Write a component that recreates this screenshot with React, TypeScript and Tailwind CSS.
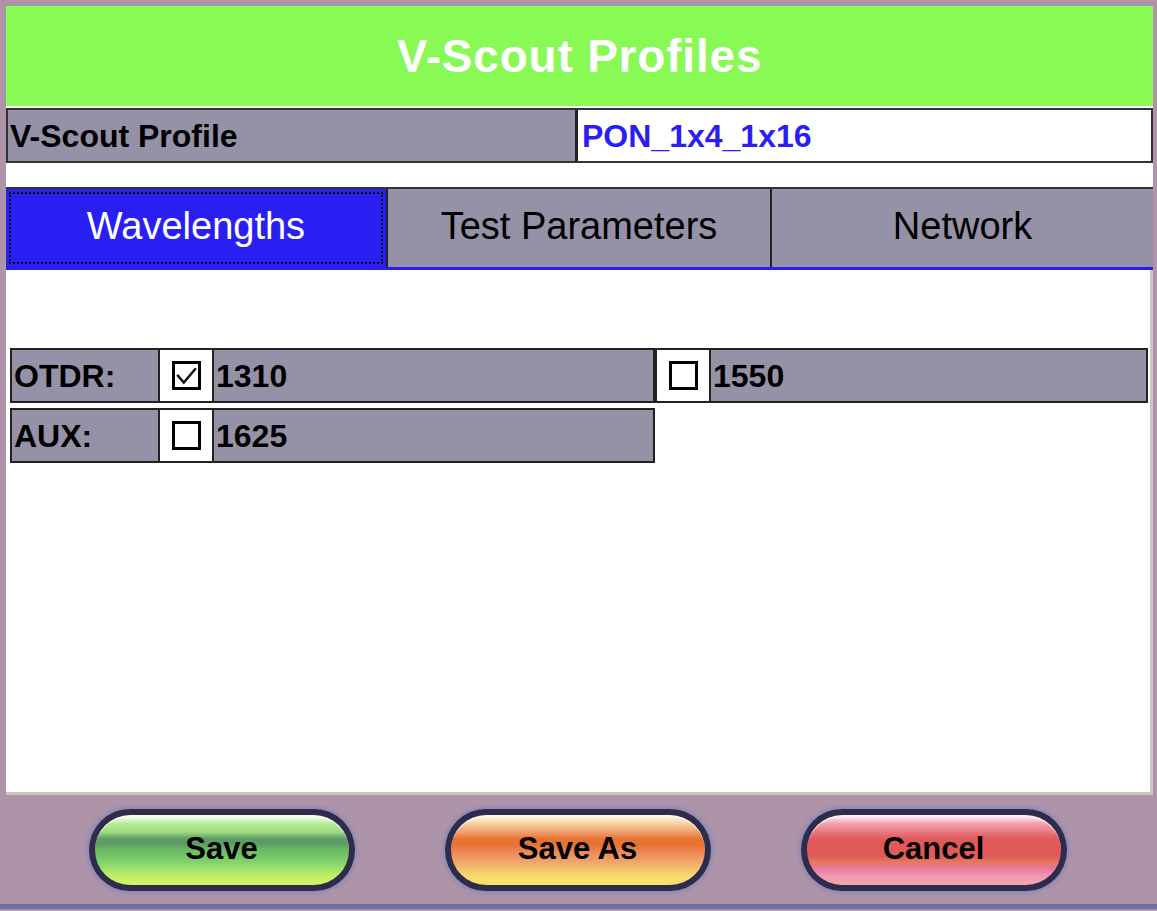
import React from "react";

const font = "font-['Liberation_Sans',Arial,sans-serif]";

const CheckBox = ({ checked }: { checked?: boolean }) => (
  <div className="w-[56px] shrink-0 bg-white border-x-2 border-[#222] flex items-center justify-center">
    <div className="w-[29px] h-[29px] border-[3px] border-black flex items-center justify-center">
      {checked && (
        <svg width="22" height="22" viewBox="0 0 20 20">
          <path d="M2 9 L8 16 L19 3" fill="none" stroke="#111" strokeWidth="2.2" />
        </svg>
      )}
    </div>
  </div>
);

const Cell = ({ children, className = "" }: { children?: React.ReactNode; className?: string }) => (
  <div className={`bg-[#9591a6] flex items-center pl-[2px] text-[32px] font-bold text-black ${className}`}>
    {children}
  </div>
);

const buttonStyles = {
  green:
    "bg-[linear-gradient(to_bottom,#f4fff0_0%,#b8ea98_10%,#a0dc80_22%,#5e9c66_32%,#5e9c66_40%,#6cba64_48%,#76c868_60%,#90dc6c_72%,#b8ec66_84%,#d6f66a_100%)]",
  orange:
    "bg-[linear-gradient(to_bottom,#fff2dc_0%,#f8d0a0_10%,#f0a070_22%,#e87434_32%,#e87434_42%,#ec8a58_52%,#f0a068_64%,#f4c070_76%,#f6dc6c_88%,#f8e070_100%)]",
  red:
    "bg-[linear-gradient(to_bottom,#ffe4ec_0%,#f0a0b0_10%,#e87880_22%,#e05a5a_32%,#e05a5a_58%,#e8785c_66%,#e878a0_76%,#ee98ac_86%,#f2a8b4_100%)]",
};

const PillButton = ({ label, tone }: { label: string; tone: keyof typeof buttonStyles }) => (
  <div className="w-[266px] h-[82px] rounded-full bg-[#2e2c4a] p-[6px] shadow-[0_0_4px_2px_#8886b8]">
    <div
      className={`w-full h-full rounded-full border-t-2 border-white/80 flex items-center justify-center pb-[3px] text-[31px] font-bold text-black ${buttonStyles[tone]}`}
    >
      {label}
    </div>
  </div>
);

export default function App() {
  return (
    <div className={`w-[1157px] h-[911px] bg-[#ae94a8] flex flex-col ${font}`}>
      <div className="flex flex-col pl-[6px] pr-[4px] pt-[6px]">
        <div className="h-[100px] bg-[#88f955] flex items-center justify-center text-white text-[46px] font-bold tracking-[0.8px]">
          V-Scout Profiles
        </div>
        <div className="bg-white flex flex-col">
          <div className="h-[2px]" />
          <div className="h-[55px] flex border-2 border-[#333]">
            <div className="w-[570px] bg-[#9591a6] flex items-center pl-[2px] text-[32px] font-bold text-black border-r-[3px] border-[#222]">
              V-Scout Profile
            </div>
            <div className="flex-1 bg-white flex items-center pl-[4px] text-[32px] font-bold text-[#2b1ef2]">
              PON_1x4_1x16
            </div>
          </div>
          <div className="h-[24px]" />
          <div className="h-[80px] flex border-t-2 border-[#333]">
            <div className="w-[382px] bg-[#2a1ff2] p-[3px] border-r-2 border-[#222]">
              <div className="w-full h-full border-2 border-dotted border-black flex items-center justify-center pb-[3px] text-white text-[38px]">
                Wavelengths
              </div>
            </div>
            <div className="w-[384px] bg-[#9591a6] flex items-center justify-center pb-[3px] text-[38px] text-black border-r-2 border-[#222]">
              Test Parameters
            </div>
            <div className="flex-1 bg-[#9591a6] flex items-center justify-center pb-[3px] text-[38px] text-black">
              Network
            </div>
          </div>
          <div className="h-[3px] bg-[#2a1ff2]" />
          <div className="h-[525px] bg-white border-r-[3px] border-b-[3px] border-[#c8c8c0] pt-[78px] pl-[4px] pr-[2px] flex flex-col gap-[5px]">
            <div className="h-[55px] flex border-2 border-[#222]">
              <Cell className="w-[146px]">OTDR:</Cell>
              <CheckBox checked />
              <Cell className="w-[441px] border-r-2 border-[#222]">1310</Cell>
              <CheckBox />
              <Cell className="flex-1">1550</Cell>
            </div>
            <div className="h-[55px] w-[645px] flex border-2 border-[#222]">
              <Cell className="w-[146px]">AUX:</Cell>
              <CheckBox />
              <Cell className="flex-1">1625</Cell>
            </div>
          </div>
        </div>
      </div>
      <div className="flex-1 flex items-center justify-center gap-[90px] pr-[2px]">
        <PillButton label="Save" tone="green" />
        <PillButton label="Save As" tone="orange" />
        <PillButton label="Cancel" tone="red" />
      </div>
      <div className="h-[5px] bg-[#6f6ca6]" />
      <div className="h-[2px]" />
    </div>
  );
}
